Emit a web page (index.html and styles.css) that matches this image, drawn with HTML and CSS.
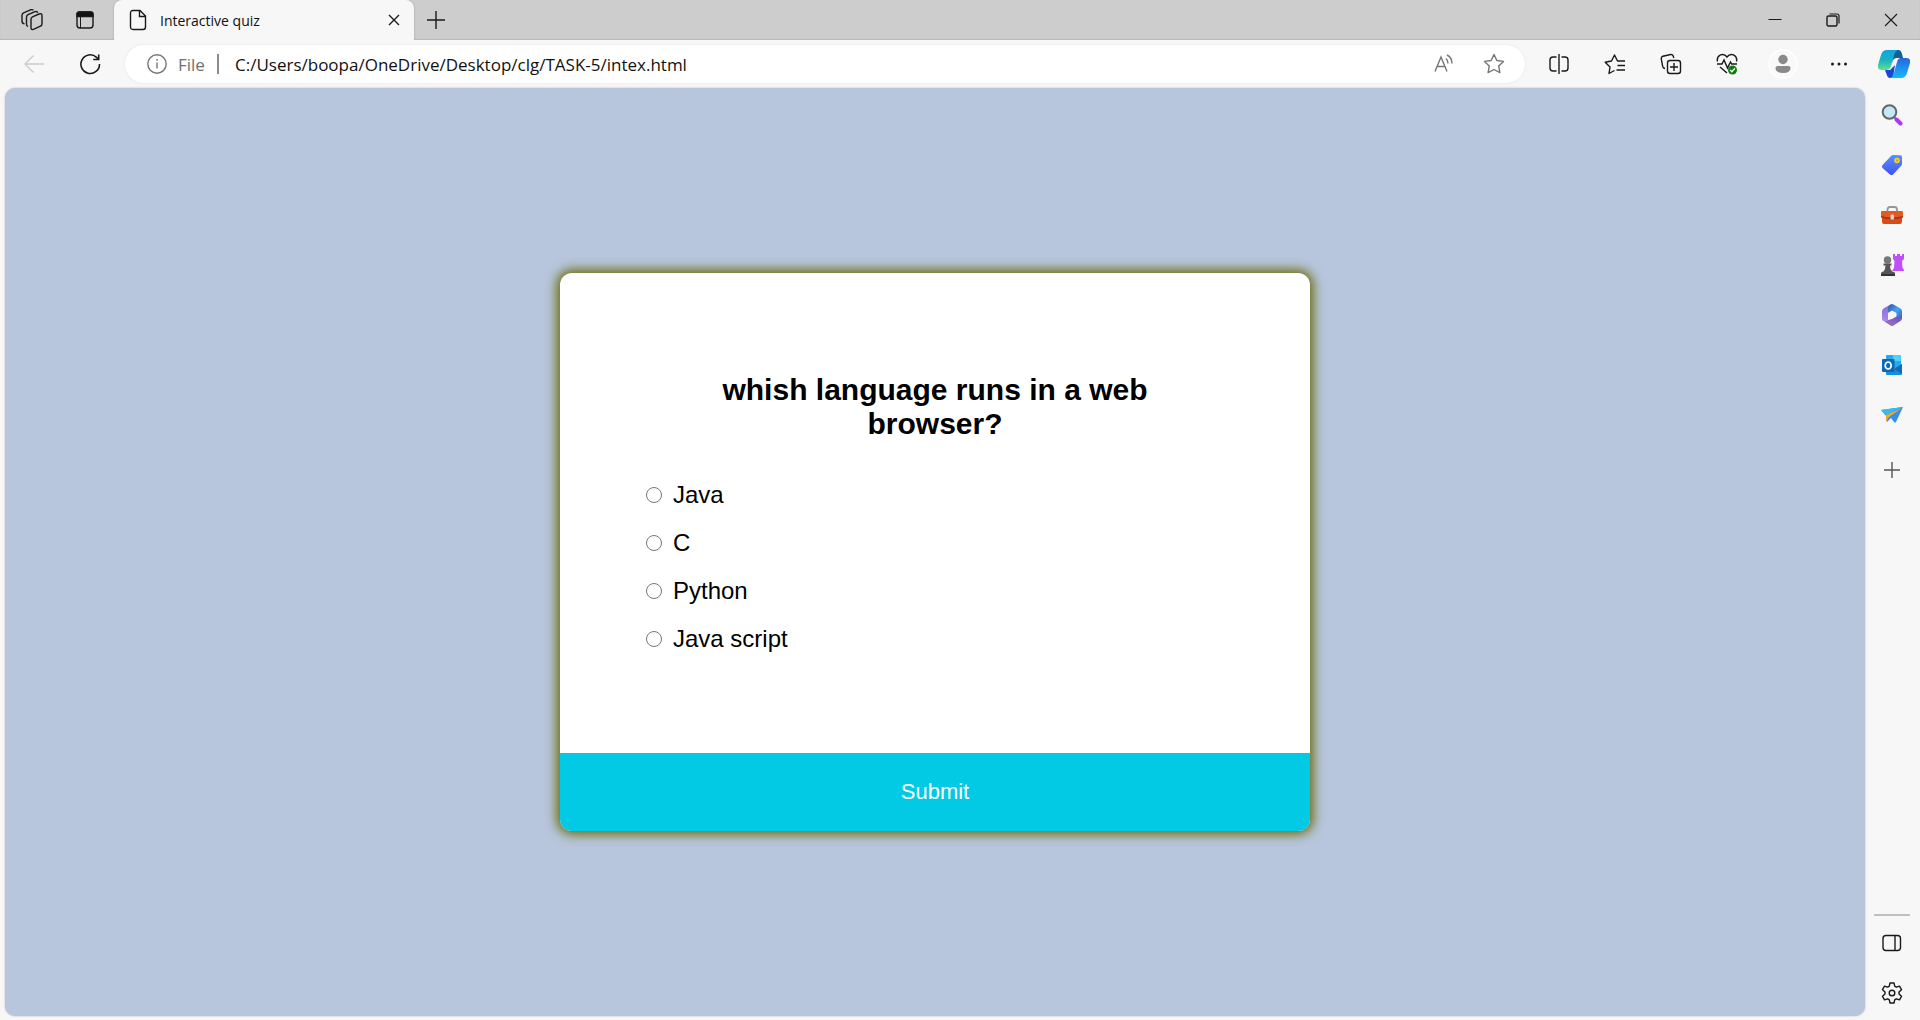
FILE: index.html
```html
<!DOCTYPE html>
<html lang="en">
<head>
<meta charset="utf-8">
<title>Interactive quiz</title>
<link rel="stylesheet" href="styles.css">
</head>
<body>
<div class="browser">
  <header class="titlebar">
    <div class="workspace">
      <button class="tool" aria-label="Workspaces"><svg width="24" height="24" viewBox="0 0 24 24"><path d="M11 11q0-1.500 1.500-2.200L19 6q3-.8 3 1.500v8q0 2-1.500 2.700l-6.500 3q-3 1-3-1.500zM8 18.500q-1.500-.5-1.500-2.500V9.500q0-2 1.500-2.800l7-3q2-.7 3 1M4.500 15.800Q2 15.500 2 13V7.500q0-2 1.500-2.700l7-3q2-.5 3 .5"/></svg></button>
      <button class="tool" aria-label="Tab actions"><svg width="20" height="20" viewBox="0 0 20 20"><rect x="2" y="2" width="16" height="16" rx="3"/><path d="M2 6.500V4q0-2 2-2h12q2 0 2 2v2.500z" fill="#111"/><path d="M5.500 6v12" stroke-width="1"/></svg></button>
    </div>
    <div class="tab">
      <svg width="18" height="22" viewBox="0 0 18 22"><path d="M4 1.500h7l5.500 5.500v11q0 2.500-2.500 2.500H4q-2.500 0-2.500-2.500V4Q1.500 1.500 4 1.500zM10.500 2v5.500H16"/></svg>
      <span class="tab-title">Interactive quiz</span>
      <button class="tab-close" aria-label="Close tab"><svg width="12" height="12" viewBox="0 0 12 12"><path d="M1 1l10 10M11 1L1 11"/></svg></button>
    </div>
    <button class="new-tab" aria-label="New tab"><svg width="18" height="18" viewBox="0 0 18 18"><path d="M9 0v18M0 9h18"/></svg></button>
    <div class="window-controls">
      <button class="win" aria-label="Minimize"><svg width="14" height="14" viewBox="0 0 14 14"><path d="M.5 6.500h13" stroke-width="1"/></svg></button>
      <button class="win" aria-label="Restore"><svg width="14" height="14" viewBox="0 0 14 14"><rect x="1" y="3" width="10" height="10" rx="1.500"/><path d="M3.500 1H11q2 0 2 2v7.500" stroke-width="1.200"/></svg></button>
      <button class="win" aria-label="Close"><svg width="14" height="14" viewBox="0 0 14 14"><path d="M1 1l12 12M13 1L1 13" stroke-width="1.100"/></svg></button>
    </div>
  </header>

  <nav class="toolbar" aria-label="Browser toolbar">
    <div class="history">
      <button class="nav-button disabled" aria-label="Back"><svg width="22" height="20" viewBox="0 0 22 20"><path d="M10.500 1.500L2 10l8.500 8.500M2 10h19"/></svg></button>
      <button class="nav-button" aria-label="Refresh"><svg width="22" height="22" viewBox="0 0 22 22"><path d="M20.500 11A9.300 9.300 0 1 1 17.500 4.300L19.500 6.500M19.700 1.500v5h-5.500" stroke-width="1.600"/></svg></button>
    </div>
    <div class="address">
      <svg class="muted" width="20" height="20" viewBox="0 0 20 20"><circle cx="10" cy="10" r="9.200"/><path d="M10 8.500v6M10 5v1.800"/></svg>
      <span class="scheme">File</span>
      <span class="divider"></span>
      <input class="url" type="text" aria-label="Address" value="C:/Users/boopa/OneDrive/Desktop/clg/TASK-5/intex.html">
      <button class="address-button" aria-label="Read aloud"><svg class="muted" width="20" height="20" viewBox="0 0 20 20"><path d="M1 17.500L7 3l6 14.500M3 12.500h8M12 4.500q2 1.800 2 5M13 1q5 2.500 5 8.500" /></svg></button>
      <button class="address-button" aria-label="Add to favorites"><svg class="muted" width="22" height="22" viewBox="0 0 22 22"><path d="M11 1.500l2.900 6 6.600.9-4.800 4.600 1.200 6.600-5.900-3.100-5.900 3.100 1.200-6.600L1.500 8.400l6.600-.9z" stroke-linejoin="round"/></svg></button>
    </div>
    <div class="extras">
      <button class="extra" aria-label="Split screen"><svg width="20" height="20" viewBox="0 0 20 20"><path d="M7.500 3H4Q1 3 1 6v8q0 3 3 3h3.500M12.500 3H16q3 0 3 3v8q0 3-3 3h-3.500M10 0v20"/></svg></button>
      <button class="extra" aria-label="Favorites"><svg width="22" height="22" viewBox="0 0 22 22"><path d="M10.500 17.500l-5.500 3 1-6.500-4.800-4.800L7.500 8 10.500 2l3 6h7.500M13.500 12.500H21M12.500 17H21" stroke-linejoin="round"/></svg></button>
      <button class="extra" aria-label="Collections"><svg width="22" height="22" viewBox="0 0 22 22"><rect x="7.500" y="7.500" width="13" height="13" rx="2.500"/><path d="M14 10v8M10 14h8M5 15.500q-1.800-.2-2.300-2L1.300 6.200Q1 4 3 3.200L10.500 1.500q2-.3 2.700 1.500l.6 2"/></svg></button>
      <button class="extra" aria-label="Browser essentials"><svg width="22" height="24" viewBox="0 0 22 24"><path d="M1.500 9.500Q.5 4.500 4.500 2.800 8.500 1.500 11 5q2.500-3.500 6.500-2.200 4 1.700 3 6.700M1 12h5l2-4 3.500 8 3-6 1.200 2H21M4 15l7 6"/><circle class="ok" cx="16.500" cy="18" r="4.500"/><path class="tick" d="M14.200 18l1.700 1.700 3-3.300"/></svg></button>
      <button class="extra" aria-label="Profile"><svg width="30" height="30" viewBox="0 0 30 30"><circle cx="15" cy="15" r="14" fill="#f9f9f9" stroke="#fff"/><g fill="#8a8a8a" stroke="none"><circle cx="15" cy="10.500" r="4.700"/><path d="M9.500 17h11q2 0 2 2 0 5-7.500 5t-7.500-5q0-2 2-2z"/></g></svg></button>
      <button class="extra" aria-label="Settings and more"><svg width="18" height="6" viewBox="0 0 18 6"><g class="dots"><circle cx="2.500" cy="3" r="1.500"/><circle cx="9" cy="3" r="1.500"/><circle cx="15.500" cy="3" r="1.500"/></g></svg></button>
      <button class="copilot" aria-label="Copilot"><svg class="color" width="32" height="28" viewBox="0 0 32 28">
        <defs>
          <linearGradient id="cop-a" x1="0" y1="0" x2="0" y2="1"><stop stop-color="#11a3df"/><stop offset=".5" stop-color="#19b3c3"/><stop offset="1" stop-color="#61e08e"/></linearGradient>
          <linearGradient id="cop-b" x1="0" y1="0" x2="0" y2="1"><stop stop-color="#2866da"/><stop offset="1" stop-color="#15b8fc"/></linearGradient>
        </defs>
        <path d="M15 0h5.500q2.500 0 3.500 4l1 4h-6q-4 0-5 5z" fill="#126196"/>
        <path d="M7 20h5l5-5-2 13h-3q-2.500 0-3.500-4z" fill="#1947d2"/>
        <path d="M9 0h11q-3 1-4 5l-3 11q-1 4-5 4H4q-5 0-4-5L3 5q1.500-5 6-5z" fill="url(#cop-a)"/>
        <path d="M23 8h5q5 0 4 5l-3 10q-1.500 5-6 5H12q3-1 4-5l3-11q1-4 4-4z" fill="url(#cop-b)"/>
      </svg></button>
    </div>
  </nav>

  <div class="content">
    <main class="page">
      <form class="quiz">
        <div class="quiz-body">
          <h2 class="question">whish language runs in a web browser?</h2>
          <ul class="answers">
            <li class="answer"><input type="radio" name="answer" id="a" class="radio"><label for="a">Java</label></li>
            <li class="answer"><input type="radio" name="answer" id="b" class="radio"><label for="b">C</label></li>
            <li class="answer"><input type="radio" name="answer" id="c" class="radio"><label for="c">Python</label></li>
            <li class="answer"><input type="radio" name="answer" id="d" class="radio"><label for="d">Java script</label></li>
          </ul>
        </div>
        <button class="submit" type="button">Submit</button>
      </form>
    </main>

    <aside class="sidebar" aria-label="Sidebar">
      <button class="side" aria-label="Search"><svg class="color" width="22" height="22" viewBox="0 0 22 22"><path d="M13 13l2 2" stroke="#777" stroke-width="2"/><path d="M15.500 15.500l4 4" stroke="#b235f2" stroke-width="4" stroke-linecap="round"/><circle cx="8.500" cy="8" r="6.800" fill="#c5e7fa" stroke="#666" stroke-width="2"/></svg></button>
      <button class="side" aria-label="Shopping"><svg class="color" width="22" height="22" viewBox="0 0 22 22"><defs><linearGradient id="tag" x1="0" y1="0" x2="0" y2="1"><stop stop-color="#5594f7"/><stop offset="1" stop-color="#4251f4"/></linearGradient></defs><path d="M12 1l7.500.3Q21 1.500 21 3v7q0 1-1 2l-8 8.500q-1.500 1.200-3 0L1.500 14q-1.200-1.500 0-3L10 2q1-1 2-1z" fill="url(#tag)"/><circle cx="16" cy="6.500" r="2" fill="#bfa76b" stroke="#ffd02c" stroke-width="1.500"/></svg></button>
      <button class="side" aria-label="Tools"><svg class="color" width="24" height="20" viewBox="0 0 24 20"><path d="M7.500 8V4.500Q7.500 2 10 2h4.500Q17 2 17 4.500V8" fill="none" stroke="#969696" stroke-width="1.800"/><path d="M2 11h20v6q0 2-2 2H4q-2 0-2-2z" fill="#d84c18"/><path d="M2 6h20q1 0 1 1v5q-11 3-22 0V7q0-1 1-1z" fill="#e35b20"/><path d="M1 11q11 3 22 0v1.500q-11 3-22 0z" fill="#a62c11"/><rect x="10.500" y="9.500" width="3.500" height="5" rx="1" fill="#d4d4d4"/></svg></button>
      <button class="side" aria-label="Games"><svg class="color" width="24" height="24" viewBox="0 0 24 24"><path d="M13 1h2v2h2V1h3v2h2V1h2v5l-2 2 .5 7q1.500.5 1.500 3H12l2-3 .5-7L13 6z" fill="#be50f5"/><circle cx="7.500" cy="7" r="3.700" fill="#777"/><path d="M3.500 10.500h8v2H10q0 4 2 6 3 0 3 2V23H1v-2.500q0-2 2.500-2 2-2 2-6h-2z" fill="#555"/><path d="M1 21h14v2H1z" fill="#333"/></svg></button>
      <button class="side" aria-label="Microsoft 365"><svg class="color" width="22" height="24" viewBox="0 0 22 24">
        <defs>
          <linearGradient id="m-a" x1="0" y1="0" x2="0" y2="1"><stop stop-color="#8a6ad8"/><stop offset="1" stop-color="#a98be6"/></linearGradient>
          <linearGradient id="m-b" x1="0" y1="0" x2="1" y2="1"><stop stop-color="#2a4fa8"/><stop offset=".5" stop-color="#4aa5ea"/><stop offset="1" stop-color="#3a56cf"/></linearGradient>
          <linearGradient id="m-c" x1="0" y1="1" x2="1" y2="0"><stop stop-color="#a873d0"/><stop offset="1" stop-color="#6a52b8"/></linearGradient>
        </defs>
        <path d="M9.500 1.500l-7 4Q1 6.500 1 8.500v7q0 2 1.500 2.500 3 1 4.500-1V10l6-4z" fill="url(#m-a)"/>
        <path d="M9.500 1.500q1.500-1 3 0l7 4Q21 6.500 21 8.500v7l-3.500 1.500-2-3v-4L11 7.500l-4 2V5q0-2 2.500-3.500z" fill="url(#m-b)"/>
        <path d="M15.500 13.500l5.500 1q0 2.500-1.500 3.500l-7 4.500q-1.500 1-3 0L3 18.300q2.500.2 4-1.300l4-1z" fill="url(#m-c)"/>
      </svg></button>
      <button class="side" aria-label="Outlook"><svg class="color" width="22" height="22" viewBox="0 0 22 22"><path d="M6 1h13q1 0 1 1v12H5V2q0-1 1-1z" fill="#28a8ea"/><path d="M12 1h8v6h-8z" fill="#50d1f5"/><path d="M5 12l8 3 8-5v10q0 1-1 1H6q-1 0-1-1z" fill="#1490df"/><path d="M21 10v10l-8-5z" fill="#136bb8"/><rect x="1" y="5" width="12.500" height="13" rx="1" fill="#0868bd"/><ellipse cx="7.200" cy="11.500" rx="3" ry="3.500" fill="none" stroke="#fff" stroke-width="1.700"/></svg></button>
      <button class="side" aria-label="Drop"><svg class="color" width="24" height="20" viewBox="0 0 24 20"><path d="M1 5l22-3-7 15q-1 1-2 0l-3-4-4 4-1-6z" fill="#328eef"/><path d="M1 5l22-3L6 10z" fill="#37bbed"/><path d="M6 10L22 3 9 12l-3 5z" fill="#f5a629"/></svg></button>
      <button class="side customize" aria-label="Customize"><svg width="16" height="16" viewBox="0 0 16 16"><path d="M8 0v16M0 8h16" stroke="#555"/></svg></button>
      <div class="side-footer">
        <button class="side" aria-label="Toggle sidebar"><svg width="20" height="18" viewBox="0 0 20 18"><rect x="1" y="1.500" width="17.500" height="15" rx="3"/><path d="M13 1.500v15"/></svg></button>
        <button class="side" aria-label="Settings"><svg width="22" height="22" viewBox="0 0 22 22"><path d="M9 1h4l.7 3.200 1.600 1 3.200-1 2 3.500L18 10v2l2.500 2.300-2 3.500-3.200-1-1.600 1L13 21H9l-.7-3.200-1.600-1-3.200 1-2-3.500L4 12v-2L1.500 7.700l2-3.500 3.200 1 1.600-1z" stroke-linejoin="round"/><circle cx="11" cy="11" r="2.800"/></svg></button>
      </div>
    </aside>
  </div>
</div>
</body>
</html>
```
FILE: styles.css
```css
* {
  box-sizing: border-box;
}

body {
  margin: 0;
  font-family: "Open Sans", "Noto Sans", sans-serif;
  color: #111;
  background: #f7f7f7;
}

button {
  display: flex;
  align-items: center;
  justify-content: center;
  padding: 0;
  border: 0;
  background: none;
  color: inherit;
  font: inherit;
}

svg {
  flex: none;
  fill: none;
  stroke: #1a1a1a;
  stroke-width: 1.4;
}

.color {
  stroke: none;
}

.muted {
  stroke: #757575;
}

.browser {
  display: flex;
  flex-direction: column;
  min-height: 100vh;
}

/* Title bar */
.titlebar {
  display: flex;
  height: 40px;
  background: #cdcdcd;
  box-shadow: inset 0 -1px 1px #b8b8b8;
}

.workspace {
  display: flex;
  width: 114px;
  padding-left: 5px;
}

.tool {
  width: 53px;
}

.tab {
  display: flex;
  align-items: center;
  width: 300px;
  padding: 0 14px 0 15px;
  border-radius: 8px 8px 0 0;
  background: #f7f7f7;
  box-shadow: 0 0 2px #999;
  clip-path: inset(0 -3px);
}

.tab-title {
  flex: 1;
  margin-left: 13px;
  font-size: 14px;
}

.tab-close {
  width: 12px;
}

.new-tab {
  width: 44px;
}

.window-controls {
  display: flex;
  margin-left: auto;
}

.win {
  width: 58px;
}

/* Toolbar */
.toolbar {
  display: flex;
  align-items: center;
  height: 48px;
}

.history {
  display: flex;
  width: 125px;
  padding-left: 6px;
}

.nav-button {
  width: 56px;
}

.disabled svg {
  stroke: #ccc;
}

.address {
  display: flex;
  flex: 1;
  align-items: center;
  height: 38px;
  padding: 0 6px 0 22px;
  border-radius: 19px;
  background: #fff;
  box-shadow: 0 0 3px #e4e4e4;
}

.scheme {
  width: 39px;
  margin-left: 11px;
  color: #707070;
  font-size: 17px;
}

.divider {
  width: 2px;
  height: 20px;
  background: #8c8c8c;
}

.url {
  flex: 1;
  min-width: 0;
  padding: 0;
  border: 0;
  margin-left: 16px;
  outline: 0;
  color: #111;
  background: none;
  font: inherit;
  font-size: 17px;
}

.address-button {
  width: 50px;
  height: 38px;
}

.extras {
  display: flex;
  padding-left: 6px;
}

.extra {
  width: 56px;
  height: 38px;
}

.dots {
  fill: #1a1a1a;
  stroke: none;
}

.ok {
  fill: #107c10;
  stroke: none;
}

.tick {
  stroke: #fff;
}

.copilot {
  width: 53px;
  height: 38px;
}

/* Page area and sidebar */
.content {
  display: flex;
  flex: 1;
}

.page {
  display: flex;
  flex: 1;
  align-items: center;
  justify-content: center;
  margin: 0 0 4px 5px;
  border-radius: 10px;
  background: #b7c6dc;
  box-shadow: 0 0 2px #b0b0b0;
  font-family: "Liberation Sans", Arial, sans-serif;
  color: #000;
}

.sidebar {
  display: flex;
  flex-direction: column;
  align-items: center;
  width: 55px;
  padding: 2px 2px 0 0;
}

.side {
  width: 36px;
  height: 50px;
}

.customize {
  margin-top: 5px;
}

.side-footer {
  display: flex;
  flex-direction: column;
  align-items: center;
  width: 36px;
  border-top: 2px solid #bfbfbf;
  margin: auto 0 2px;
  padding-top: 2px;
}

/* Quiz card */
.quiz {
  width: 750px;
  overflow: hidden;
  border-radius: 12px;
  background: #fff;
  box-shadow: 0 0 12px 3px #666600;
}

.quiz-body {
  padding: 80px;
}

.question {
  margin: 0;
  padding: 20px;
  font-size: 30px;
  line-height: 34px;
  text-align: center;
}

.answers {
  margin: 0;
  padding: 10px 0;
  list-style: none;
}

.answer {
  display: flex;
  align-items: center;
  gap: 11px;
  height: 48px;
  padding-left: 6px;
  font-size: 24px;
}

.radio {
  width: 16px;
  height: 16px;
  margin: 0;
}

.submit {
  width: 100%;
  height: 78px;
  color: #fff;
  background: #03cae4;
  font-size: 22px;
}
```
